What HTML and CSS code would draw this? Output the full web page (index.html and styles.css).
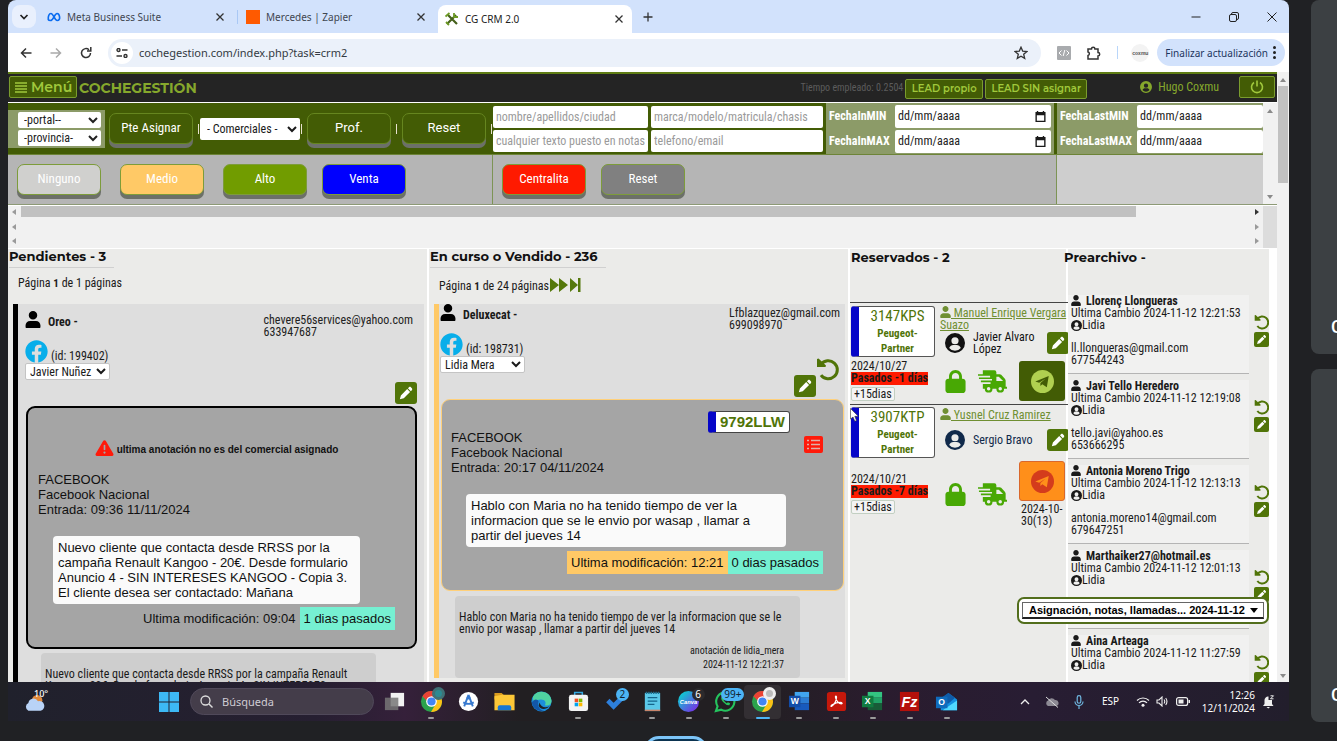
FILE: index.html
```
<!DOCTYPE html>
<html lang="es">
<head>
<meta charset="utf-8">
<title>CG CRM 2.0</title>
<link rel="stylesheet" href="styles.css">
</head>
<body>
<svg class="sprite" aria-hidden="true">
  <symbol id="user" viewBox="0 0 448 512"><path d="M224 256c70.700 0 128-57.300 128-128S294.700 0 224 0 96 57.300 96 128s57.300 128 128 128zm89.600 48H134.400C60.200 304 0 364 0 432v50c0 18 12 30 30 30h388c18 0 30-12 30-30v-50c0-68-60.200-128-134.400-128z"/></symbol>
  <symbol id="circle-user" viewBox="0 0 24 24"><path fill-rule="evenodd" d="M12 0a12 12 0 1 0 0 24 12 12 0 0 0 0-24zm0 5a4.300 4.300 0 1 1 0 8.600A4.300 4.300 0 0 1 12 5zm-7 13c1-2.500 2.800-3.700 5-3.700h4c2.200 0 4 1.200 5 3.700a9 9 0 0 1-14 0z"/></symbol>
  <symbol id="facebook" viewBox="0 0 512 512"><path d="M504 256C504 119 393 8 256 8S8 119 8 256c0 123.780 90.690 226.380 209.250 245V327.690h-63V256h63v-54.640c0-62.150 37-96.480 93.670-96.480 27.140 0 55.520 4.840 55.520 4.840v61h-31.280c-30.800 0-40.410 19.120-40.410 38.730V256h68.780l-11 71.690h-57.780V501C413.310 482.380 504 379.780 504 256z"/></symbol>
  <symbol id="pencil" viewBox="0 0 24 24"><path d="M5.200 15.200 13.600 6.800l3.800 3.800L9 19l-5.200 1.400zM14.600 5.800l1.400-1.400c.8-.8 1.800-.8 2.500 0l1.300 1.300c.7.700.7 1.700 0 2.500l-1.400 1.400z"/></symbol>
  <symbol id="undo" viewBox="0 0 24 24"><path d="M5 7.500A9 9 0 1 1 5 18" fill="none" stroke="currentColor" stroke-width="3"/><path d="M1 2l1.500-.5L10 8.500 9.500 10H1z"/></symbol>
  <symbol id="lock" viewBox="0 0 448 512"><path d="M144 144v48H304V144c0-44.200-35.800-80-80-80s-80 35.800-80 80zM80 192V144C80 64.500 144.500 0 224 0s144 64.500 144 144v48h16c35.300 0 64 28.700 64 64V448c0 35.300-28.700 64-64 64H64c-35.300 0-64-28.700-64-64V256c0-35.300 28.700-64 64-64H80z"/></symbol>
  <symbol id="truck" viewBox="0 0 30 24"><path fill-rule="evenodd" d="M5 1h12q2 0 2 2v2h3.500l1.500.6L28 10l.6 1.400V18H30v2h-3a4 4 0 0 1-8 0h-4a4 4 0 0 1-8 0H5v-5h8v-1.800H3v-1.600h11.500V10H1V8.400h11.500V6.600H0V5h5zm14 6.500V12h7l-4.500-4.500z"/><circle cx="11" cy="20" r="1.800" fill="#ebebe9"/><circle cx="23" cy="20" r="1.800" fill="#ebebe9"/></symbol>
  <symbol id="plane" viewBox="0 0 24 24"><circle cx="12" cy="12" r="12"/><path class="cut" d="M4.500 12 18.500 6.200 16.500 18l-4.700-3.200-2 2v-3.300L15 9l-6.500 4.300z"/></symbol>
  <symbol id="cross" viewBox="0 0 10 10"><path d="M1.500 1.500l7 7m0-7l-7 7" fill="none" stroke="currentColor" stroke-width="1.300"/></symbol>
  <symbol id="calendar" viewBox="0 0 12 12"><path fill-rule="evenodd" d="M2 0h1.500v1h5V0H10v1h1.500v11H.5V1H2zM2 4.500v6h8v-6z"/></symbol>
  <symbol id="chrome" viewBox="0 0 24 24"><circle cx="12" cy="12" r="11" fill="#2ba24c"/><path d="M2.500 6.500a11 11 0 0 1 19.500 1H12v9z" fill="#ea4335"/><path d="M22 7.500A11 11 0 0 1 11.500 23L17 13.500 15.500 7.500z" fill="#fbc116"/><circle cx="12" cy="12" r="5.600" fill="#fff"/><circle cx="12" cy="12" r="4.300" fill="#4285f4"/></symbol>
</svg>

<div class="shell">
  <div class="screen">
    <header class="tabs">
      <button class="tab-search" aria-label="Buscar pestañas"><svg viewBox="0 0 10 10"><path d="M1.500 3l3.500 3.500L8.500 3" fill="none" stroke="#222" stroke-width="1.700"/></svg></button>
      <div class="tab tab-meta">
        <svg class="fav" viewBox="0 0 16 12"><path d="M1.500 9C1 5 2.500 2 4.500 2c3 0 4 8 7.200 8 2 0 3-1.500 2.700-4C14 3 12.800 2 11.500 2 8.500 2 7.500 10 4 10 2.500 10 1.700 9.500 1.500 9z" fill="none" stroke="#0a6cf0" stroke-width="1.900"/></svg>
        <span>Meta Business Suite</span><svg class="x"><use href="#cross"/></svg>
      </div>
      <div class="tab tab-zapier"><i class="fav orange"></i><span>Mercedes | Zapier</span><svg class="x"><use href="#cross"/></svg></div>
      <div class="tab active">
        <svg class="fav" viewBox="0 0 14 14"><path d="M2 12l9-9M3 3l9 9" stroke="#46611c" stroke-width="2.200"/><path d="M.5 4.500l4-3.500M9 1v4h4M1 10l3 3" fill="none" stroke="#6c9a24" stroke-width="1.800"/></svg>
        <span>CG CRM 2.0</span><svg class="x"><use href="#cross"/></svg>
      </div>
      <button class="newtab" aria-label="Nueva pestaña"><svg viewBox="0 0 10 10"><path d="M5 .5v9M.5 5h9" stroke="#333" stroke-width="1.300"/></svg></button>
      <div class="winctl">
        <svg viewBox="0 0 10 10"><path d="M.5 5h9" stroke="#222"/></svg>
        <svg viewBox="0 0 10 10"><rect x=".5" y="2.500" width="7" height="7" rx="1.500" fill="none" stroke="#222"/><path d="M2.500 2.500V2A1.500 1.500 0 0 1 4 .5h4A1.500 1.500 0 0 1 9.500 2v4A1.500 1.500 0 0 1 8 7.500" fill="none" stroke="#222"/></svg>
        <svg viewBox="0 0 10 10"><path d="M.5.5l9 9m0-9l-9 9" stroke="#222"/></svg>
      </div>
    </header>
    <div class="toolbar">
      <svg class="nav" viewBox="0 0 12 12"><path d="M11.500 6H1.500M6 1.500L1.500 6 6 10.500" fill="none" stroke="#333" stroke-width="1.500"/></svg>
      <svg class="nav" viewBox="0 0 12 12"><path d="M.5 6h10M6 1.500L10.500 6 6 10.500" fill="none" stroke="#aaa" stroke-width="1.500"/></svg>
      <svg class="nav" viewBox="0 0 12 12"><path d="M10.500 6A4.500 4.500 0 1 1 9 2.700M10.800 0v4H7" fill="none" stroke="#333" stroke-width="1.500"/></svg>
      <div class="omnibox">
        <span class="site"><svg viewBox="0 0 12 10"><path d="M6 2h5.500M.5 8H6" stroke="#333" stroke-width="1.500"/><circle cx="2.500" cy="2" r="1.500" fill="none" stroke="#333" stroke-width="1.400"/><circle cx="9.500" cy="8" r="1.500" fill="none" stroke="#333" stroke-width="1.400"/></svg></span>
        <input class="url" aria-label="Dirección" value="cochegestion.com/index.php?task=crm2">
        <svg class="star" viewBox="0 0 14 14"><path d="M7 1.200l1.700 3.900 4.200.4-3.200 2.800 1 4.100L7 10.200l-3.700 2.200 1-4.100L1.100 5.500l4.200-.4z" fill="none" stroke="#333" stroke-width="1.300"/></svg>
      </div>
      <svg class="ext" viewBox="0 0 14 14"><rect width="14" height="14" rx="1" fill="#a9abae"/><path d="M4.500 4.500L2 7l2.500 2.500M9.500 4.500L12 7 9.500 9.500M7.800 4L6.200 10" fill="none" stroke="#fff"/></svg>
      <svg class="ext" viewBox="0 0 14 14"><path d="M1 3h3.500a1.700 1.700 0 0 1 3.400 0H11v3.500a1.700 1.700 0 0 1 0 3.400V13H1V9.500a1.800 1.800 0 0 0 0-3.500z" fill="none" stroke="#333" stroke-width="1.500"/></svg>
      <i class="split"></i>
      <span class="avatar">coxmu</span>
      <button class="update">Finalizar actualización <b class="dots"><i></i><i></i><i></i></b></button>
    </div>

    <div class="viewport">
      <main class="crm">
        <div class="topbar">
          <button class="gbtn menu"><svg viewBox="0 0 12 11"><path d="M0 1h12M0 4h12M0 7h12M0 10h12" stroke="currentColor" stroke-width="1.300"/></svg>Menú</button>
          <span class="brand">COCHEGESTIÓN</span>
          <span class="elapsed">Tiempo empleado: 0.2504</span>
          <button class="gbtn lead">LEAD propio</button>
          <button class="gbtn lead sin">LEAD SIN asignar</button>
          <span class="who"><svg><use href="#circle-user"/></svg>Hugo Coxmu</span>
          <button class="gbtn power" aria-label="Salir"><svg viewBox="0 0 14 14"><path d="M7 .5v6M4 2.500a5.500 5.500 0 1 0 6 0" fill="none" stroke="currentColor" stroke-width="1.600"/></svg></button>
        </div>

        <div class="panel">
          <div class="filters">
            <div class="filter-row">
              <div class="pair geo">
                <select aria-label="Portal"><option>-portal--</option></select>
                <select aria-label="Provincia"><option>-provincia-</option></select>
              </div>
              <button class="push dark cond">Pte Asignar</button>
              <i class="bar"></i>
              <select class="comm" aria-label="Comerciales"><option>- Comerciales -</option></select>
              <i class="bar"></i>
              <button class="push dark prof">Prof.</button>
              <i class="bar mid"></i>
              <button class="push dark">Reset</button>
              <i class="bar last"></i>
              <div class="pair w1">
                <input aria-label="Nombre" placeholder="nombre/apellidos/ciudad">
                <input aria-label="Notas" placeholder="cualquier texto puesto en notas">
              </div>
              <div class="pair w2">
                <input aria-label="Vehículo" placeholder="marca/modelo/matricula/chasis">
                <input aria-label="Contacto" placeholder="telefono/email">
              </div>
              <div class="dates">
                <label for="imin">FechaInMIN</label><span class="date"><input id="imin" value="dd/mm/aaaa"><svg><use href="#calendar"/></svg></span>
                <label for="imax">FechaInMAX</label><span class="date"><input id="imax" value="dd/mm/aaaa"><svg><use href="#calendar"/></svg></span>
              </div>
              <div class="dates more">
                <label for="lmin">FechaLastMIN</label><span class="date"><input id="lmin" value="dd/mm/aaaa"></span>
                <label for="lmax">FechaLastMAX</label><span class="date"><input id="lmax" value="dd/mm/aaaa"></span>
              </div>
            </div>
            <div class="level-row">
              <div class="cell levels"><button class="push none">Ninguno</button><button class="push mid-l">Medio</button><button class="push high">Alto</button><button class="push sale">Venta</button></div>
              <div class="cell central"><button class="push red">Centralita</button><button class="push grey">Reset</button></div>
              <div class="cell rest"></div>
            </div>
          </div>
          <div class="vbar"><i class="up"></i><i class="down"></i></div>
        </div>

        <div class="hbars">
          <div class="hbar first"><i class="l"></i><b></b><i class="r"></i></div>
          <div class="hbar"><i class="l"></i><i class="r"></i></div>
          <div class="hbar"><i class="l"></i><i class="r"></i></div>
        </div>

        <div class="board">
          <section class="col">
            <h2><span>Pendientes - 3</span></h2>
            <p class="pages">Página <b>1</b> de 1 páginas</p>
            <article class="lead-card pend">
              <div class="person"><svg class="pic"><use href="#user"/></svg><b>Oreo -</b><div class="contact">chevere56services@yahoo.com<br>633947687</div></div>
              <div class="ident"><svg><use href="#facebook"/></svg>(id: 199402)</div>
              <div class="assign"><select aria-label="Comercial"><option>Javier Nuñez</option></select></div>
              <div class="tools"><button class="edit" aria-label="Editar"><svg><use href="#pencil"/></svg></button></div>
              <div class="detail">
                <p class="warn"><svg viewBox="0 0 512 512"><path fill-rule="evenodd" d="M256 32c14.200 0 27.300 7.500 34.500 19.800l216 368c7.300 12.400 7.300 27.700.2 40.100S486.300 480 472 480H40c-14.300 0-27.600-7.700-34.700-20.100s-7-27.800.2-40.100l216-368C228.700 39.500 241.800 32 256 32zm0 128c-13.300 0-24 10.700-24 24V296c0 13.300 10.700 24 24 24s24-10.700 24-24V184c0-13.300-10.700-24-24-24zm32 224a32 32 0 1 0-64 0 32 32 0 1 0 64 0z"/></svg>ultima anotación no es del comercial asignado</p>
                <p class="origin">FACEBOOK<br>Facebook Nacional<br>Entrada: 09:36 11/11/2024</p>
                <p class="note">Nuevo cliente que contacta desde RRSS por la campaña Renault Kangoo - 20€. Desde formulario Anuncio 4 - SIN INTERESES KANGOO - Copia 3. El cliente desea ser contactado: Mañana</p>
                <p class="mod"><span>Ultima modificación: 09:04</span><span class="ago">1 dias pasados</span></p>
              </div>
              <div class="history">Nuevo cliente que contacta desde RRSS por la campaña Renault Kangoo - 20€. Desde formulario Anuncio 4 - SIN INTERESES KANGOO</div>
            </article>
          </section>

          <section class="col">
            <h2><span>En curso o Vendido - 236</span></h2>
            <p class="pages more-pages">Página <b>1</b> de 24 páginas <svg viewBox="0 0 31 14"><path d="M0 0l9 7-9 7zM9 0l9 7-9 7zM20 0l8 7-8 7zM28 0h2.500v14H28z"/></svg></p>
            <article class="lead-card curso">
              <div class="person"><svg class="pic"><use href="#user"/></svg><b>Deluxecat -</b><div class="contact">Lfblazquez@gmail.com<br>699098970</div></div>
              <div class="ident"><svg><use href="#facebook"/></svg>(id: 198731)</div>
              <div class="assign"><select aria-label="Comercial"><option>Lidia Mera</option></select></div>
              <div class="tools"><button class="edit" aria-label="Editar"><svg><use href="#pencil"/></svg></button><button class="undo" aria-label="Deshacer"><svg><use href="#undo"/></svg></button></div>
              <div class="detail">
                <div class="plate-row"><span class="plate">9792LLW</span></div>
                <svg class="list" viewBox="0 0 19 17"><rect width="19" height="17" rx="2"/><path d="M3 4.500h2M3 8.500h2M3 12.500h2M7 4.500h9M7 8.500h9M7 12.500h9" stroke="#e0b0a8" stroke-width="1.500"/></svg>
                <p class="origin">FACEBOOK<br>Facebook Nacional<br>Entrada: 20:17 04/11/2024</p>
                <p class="note">Hablo con Maria no ha tenido tiempo de ver la informacion que se le envio por wasap , llamar a partir del jueves 14</p>
                <p class="mod"><span class="amber">Ultima modificación: 12:21</span><span class="ago">0 dias pasados</span></p>
              </div>
              <div class="history">Hablo con Maria no ha tenido tiempo de ver la informacion que se le envio por wasap , llamar a partir del jueves 14
                <p class="sign">anotación de lidia_mera<br>2024-11-12 12:21:37</p></div>
            </article>
          </section>

          <section class="col reserved">
            <h2><span>Reservados - 2</span></h2>
            <article class="booking">
              <div class="bigplate"><span>3147KPS</span><b>Peugeot-<br>Partner</b></div>
              <div class="owner">
                <a href="#"><svg><use href="#user"/></svg> Manuel Enrique Vergara Suazo</a>
                <div class="agent"><svg><use href="#circle-user"/></svg><span>Javier Alvaro López</span><button class="edit" aria-label="Editar"><svg><use href="#pencil"/></svg></button></div>
              </div>
              <div class="due">2024/10/27<b>Pasados -1 días</b><button>+15dias</button></div>
              <div class="acts"><svg class="lock"><use href="#lock"/></svg><svg class="truck"><use href="#truck"/></svg><div class="tg"><button aria-label="Telegram"><svg><use href="#plane"/></svg></button></div></div>
            </article>
            <article class="booking second">
              <div class="bigplate"><span>3907KTP</span><b>Peugeot-<br>Partner</b></div>
              <div class="owner">
                <a href="#"><svg><use href="#user"/></svg> Yusnel Cruz Ramirez</a>
                <div class="agent navy"><svg><use href="#circle-user"/></svg><span>Sergio Bravo</span><button class="edit" aria-label="Editar"><svg><use href="#pencil"/></svg></button></div>
              </div>
              <div class="due">2024/10/21<b>Pasados -7 días</b><button>+15dias</button></div>
              <div class="acts"><svg class="lock"><use href="#lock"/></svg><svg class="truck"><use href="#truck"/></svg><div class="tg hot"><button aria-label="Telegram"><svg><use href="#plane"/></svg></button><span>2024-10-30(13)</span></div></div>
            </article>
            <svg class="pointer" viewBox="0 0 9 14"><path d="M.5.5v10.500l2.500-2 1.800 4.300 1.700-.8L4.800 8.300H8.300z" fill="#fff" stroke="#333" stroke-width=".6"/></svg>
          </section>

          <section class="col archive">
            <h2><span>Prearchivo -</span></h2>
            <article class="arch"><div class="info"><b><svg><use href="#user"/></svg>Llorenç Llongueras</b><span>Ultima Cambio 2024-11-12 12:21:53</span><span class="by"><svg><use href="#circle-user"/></svg>Lidia</span><span class="mail">ll.llongueras@gmail.com</span><span>677544243</span></div><div class="side"><svg><use href="#undo"/></svg><button class="edit" aria-label="Editar"><svg><use href="#pencil"/></svg></button></div></article>
            <article class="arch"><div class="info"><b><svg><use href="#user"/></svg>Javi Tello Heredero</b><span>Ultima Cambio 2024-11-12 12:19:08</span><span class="by"><svg><use href="#circle-user"/></svg>Lidia</span><span class="mail">tello.javi@yahoo.es</span><span>653666295</span></div><div class="side"><svg><use href="#undo"/></svg><button class="edit" aria-label="Editar"><svg><use href="#pencil"/></svg></button></div></article>
            <article class="arch"><div class="info"><b><svg><use href="#user"/></svg>Antonia Moreno Trigo</b><span>Ultima Cambio 2024-11-12 12:13:13</span><span class="by"><svg><use href="#circle-user"/></svg>Lidia</span><span class="mail">antonia.moreno14@gmail.com</span><span>679647251</span></div><div class="side"><svg><use href="#undo"/></svg><button class="edit" aria-label="Editar"><svg><use href="#pencil"/></svg></button></div></article>
            <article class="arch"><div class="info"><b><svg><use href="#user"/></svg>Marthaiker27@hotmail.es</b><span>Ultima Cambio 2024-11-12 12:01:13</span><span class="by"><svg><use href="#circle-user"/></svg>Lidia</span></div><div class="side"><svg><use href="#undo"/></svg><button class="edit" aria-label="Editar"><svg><use href="#pencil"/></svg></button></div></article>
            <article class="arch"><div class="info"><b><svg><use href="#user"/></svg>Aina Arteaga</b><span>Ultima Cambio 2024-11-12 11:27:59</span><span class="by"><svg><use href="#circle-user"/></svg>Lidia</span></div><div class="side"><svg><use href="#undo"/></svg><button class="edit" aria-label="Editar"><svg><use href="#pencil"/></svg></button></div></article>
          </section>
        </div>
      </main>
      <div class="pagebar"><i class="up"></i><b></b><i class="down"></i></div>
      <div class="floating"><select aria-label="Asignación"><option>Asignación, notas, llamadas... 2024-11-12</option></select></div>
    </div>

    <footer class="taskbar">
      <div class="weather"><svg viewBox="0 0 24 22"><circle cx="15" cy="9" r="6" fill="#e08a3c"/><path d="M5 21a5 5 0 0 1 0-9 6 6 0 0 1 11-2 5.500 5.500 0 0 1 3 11z" fill="#b9d3f7"/></svg><span>10°</span></div>
      <svg class="start" viewBox="0 0 20 20"><path fill="#3db9f5" d="M0 0h9.500v9.500H0zM10.500 0H20v9.500h-9.500zM0 10.500h9.500V20H0zM10.500 10.500H20V20h-9.500z"/></svg>
      <label class="search"><svg viewBox="0 0 13 13"><circle cx="5.500" cy="5.500" r="4.500" fill="none" stroke="#ddd" stroke-width="1.300"/><path d="M9 9l3.500 3.500" stroke="#ddd" stroke-width="1.400"/></svg><input placeholder="Búsqueda" aria-label="Búsqueda"></label>
      <div class="apps">
        <span><svg viewBox="0 0 24 24"><path fill="#f2f2f2" d="M8 3h14v14H8z"/><path fill="#777" fill-opacity=".85" d="M2 8h14v13H2z"/></svg></span>
        <span class="run"><svg><use href="#chrome"/></svg><i class="face"></i></span>
        <span><svg viewBox="0 0 24 24"><circle cx="12" cy="12" r="10" fill="#fff"/><path d="M12 5L7.500 17M12 5l4.500 12M6.500 13q5.500 3 11 0" fill="none" stroke="#3779cf" stroke-width="2"/><circle cx="12" cy="8" r="2" fill="#3779cf"/></svg></span>
        <span><svg viewBox="0 0 24 24"><path fill="#d99b1f" d="M1.500 3H9l2 2v5H1.500z"/><path fill="#fcc737" d="M1.500 6.500l8-1.500h13v16h-21z"/><path fill="#1677d2" d="M5 21v-3q0-2 2-2h10q2 0 2 2v3z"/></svg></span>
        <span><svg viewBox="0 0 24 24"><circle cx="12" cy="12" r="10.500" fill="#1c8fdb"/><path d="M3 7a10.500 10.500 0 0 1 19.500 4c0 4-3 6-7 5 2-3 0-6-4-6-3 0-6 1-8 3z" fill="#4fd2a0"/><path d="M9 12c-2 4 1 9 6 10-7 1-13-4-13-9 2-4 6-4 7-1z" fill="#1357a8"/><path d="M10 13c1 5 6 6 10 4-3 4-10 4-11-1z" fill="#202124"/></svg></span>
        <span class="run"><svg viewBox="0 0 24 24"><path d="M8 6V2.500h8V6" fill="none" stroke="#35a8e0" stroke-width="1.600"/><rect x="2" y="5" width="20" height="17" rx="2.500" fill="#f4f4f4"/><path fill="#f25022" d="M8 9h3.700v3.700H8z"/><path fill="#7fba00" d="M12.300 9H16v3.700h-3.700z"/><path fill="#00a4ef" d="M8 13.300h3.700V17H8z"/><path fill="#ffb900" d="M12.300 13.300H16V17h-3.700z"/></svg></span>
        <span><svg viewBox="0 0 24 24"><path d="M4 11l6 6L21 6" fill="none" stroke="#2d7fdc" stroke-width="5"/></svg><em class="badge">2</em></span>
        <span class="run"><svg viewBox="0 0 24 24"><path fill="#5bc8e8" d="M4 3h16v19H4z"/><path fill="#c9846a" d="M4 20.500h16V22H4z"/><path d="M5 3h14" stroke="#1e6f8f" stroke-width="2.500" stroke-dasharray="1.500 1"/><path d="M7 8h10M7 11.500h10M7 15h7" stroke="#15648a" stroke-width="1.300"/></svg></span>
        <span class="run"><svg viewBox="0 0 24 24"><defs><linearGradient id="cv" x2="1" y2="1"><stop offset=".2" stop-color="#15bfd3"/><stop offset=".9" stop-color="#7a2be8"/></linearGradient></defs><circle cx="12" cy="12" r="11" fill="url(#cv)"/><text x="12" y="15" text-anchor="middle" class="canva">Canva</text></svg><em class="badge plain">6</em></span>
        <span class="run"><svg viewBox="0 0 24 24"><path d="M2 22l1.700-5A9.500 9.500 0 1 1 7.500 20.500z" fill="none" stroke="#25c35e" stroke-width="2.200"/><path d="M8 7q-1.500 2 1.500 5.500T16 16l.8-2.300-2.300-1-1.200 1.100Q11 12.500 10 10.500l1-1L10 7z" fill="#25c35e"/></svg><em class="badge wide">99+</em></span>
        <span class="run focus"><svg><use href="#chrome"/></svg><i class="face white"></i></span>
        <span class="run"><svg viewBox="0 0 24 24"><path fill="#41a5ee" d="M7 2h15v6H7z"/><path fill="#2b7cd3" d="M7 8h15v6H7z"/><path fill="#185abd" d="M7 14h15v7H7z"/><path fill="#134da8" d="M1 6h12v12H1z"/><text x="7" y="15" text-anchor="middle" class="office">W</text></svg></span>
        <span class="run"><svg viewBox="0 0 24 24"><rect x="2" y="2" width="20" height="20" rx="3" fill="#c5180b"/><path d="M7 17c2.500-1.500 5-6 5-9.500 0-1.800-1.500-1.300-1 .5.700 3 3.500 6.500 6 6.500 1.500 0 1-1.500-1-1.500-3 0-6 1-8.500 2.500-1.500 1-1.500 2-.5 1.500z" fill="none" stroke="#fff" stroke-width="1.300"/></svg></span>
        <span class="run"><svg viewBox="0 0 24 24"><path fill="#33c481" d="M7 2h15v6H7z"/><path fill="#21a366" d="M7 8h15v6H7z"/><path fill="#185c37" d="M7 14h15v7H7z"/><path fill="#107c41" d="M1 6h12v12H1z"/><text x="7" y="15" text-anchor="middle" class="office">X</text></svg></span>
        <span class="run"><svg viewBox="0 0 24 24"><path fill="#b5100b" d="M2 2h20v20H2z"/><text x="12" y="18" text-anchor="middle" class="fz">Fz</text></svg></span>
        <span class="run"><svg viewBox="0 0 24 24"><path fill="#1490df" d="M6 10l8-7 9 7v11H6z"/><path fill="#0f5ba8" d="M8 7l6-4 7 5-7 6H8z"/><path fill="#50d9ff" d="M8 21l15-10v10z"/><path fill="#0f6cbd" d="M1 7h12v12H1z"/><text x="7" y="16" text-anchor="middle" class="office">O</text></svg></span>
      </div>
      <div class="tray">
        <svg class="t-up" viewBox="0 0 10 10"><path d="M1 7l4-4 4 4" fill="none" stroke="#eee" stroke-width="1.300"/></svg>
        <svg class="t-cloud" viewBox="0 0 14 12"><path d="M3 10a3 3 0 0 1 0-5.500 4 4 0 0 1 7-.5 3 3 0 0 1 1 6z" fill="#8d8a94"/><path d="M1 1l12 10.500" stroke="#ddd"/></svg>
        <svg class="t-mic" viewBox="0 0 10 14"><rect x="3.200" y=".7" width="3.600" height="7.500" rx="1.800" fill="none" stroke="#6fb7e0" stroke-width="1.200"/><path d="M1 6.500a4 4 0 0 0 8 0M5 10.500V14" fill="none" stroke="#6fb7e0" stroke-width="1.200"/></svg>
        <span class="lang">ESP</span>
        <svg class="t-wifi" viewBox="0 0 14 11"><path d="M1 4.500a8.500 8.500 0 0 1 12 0M3 6.800a5.600 5.600 0 0 1 8 0" fill="none" stroke="#eee" stroke-width="1.200"/><circle cx="7" cy="9.200" r="1.500" fill="#eee"/></svg>
        <svg class="t-vol" viewBox="0 0 13 11"><path d="M1 4h2l3-3v9L3 7H1zM8 3.500q1.500 2 0 4M9.700 2q2.500 3.500 0 7" fill="none" stroke="#eee" stroke-width="1.100"/></svg>
        <svg class="t-bat" viewBox="0 0 14 9"><rect x=".6" y=".6" width="11" height="7.800" rx="2" fill="none" stroke="#eee" stroke-width="1.200"/><path d="M2.500 2.500h5v4h-5zM12.500 3v3h1.500V3z" fill="#eee"/></svg>
        <span class="clock">12:26<br>12/11/2024</span>
        <svg class="t-bell" viewBox="0 0 13 14"><path d="M1 11l1.500-2V5a3.500 3.500 0 0 1 4-3.400V5H10v4l1.500 2zM4.500 12h3.500l-1.700 1.500z" fill="#eee"/><path d="M8.500.8h3l-3 3h3" fill="none" stroke="#eee"/></svg>
      </div>
    </footer>
    <div class="below"><i class="pill"></i></div>
  </div>
  <aside class="tiles">
    <div class="tile"><span>C</span></div>
    <div class="tile"><span>C</span></div>
  </aside>
</div>
</body>
</html>
```
FILE: styles.css
```
:root {
  --cond: "Roboto Condensed", "Liberation Sans Narrow", "DejaVu Sans Condensed", sans-serif;
  --round: "Montserrat", "Inter", sans-serif;
  --arial: "Liberation Sans", Arial, sans-serif;
  --ui: "Noto Sans", "Open Sans", sans-serif;
  --green: #435c05;
  --olive: #8c9b68;
  --lime: #a0c83c;
  --ink: #1a1a1a;
  --cut: #425c05;
}
* { box-sizing: border-box; }
body { margin: 0; background: #202124; font-family: var(--cond); font-size: 12px; line-height: 12px; color: var(--ink); }
h2, p { margin: 0; }
button, select, input { font: inherit; color: inherit; margin: 0; padding: 0; border: 0; background: none; min-width: 0; }
svg { fill: currentColor; flex: none; }
.sprite { position: absolute; width: 0; height: 0; }

.shell { display: grid; grid-template-columns: minmax(0, 1fr) 26px; column-gap: 22px; padding-left: 8px; height: 100vh; overflow: hidden; }
.screen { display: flex; flex-direction: column; min-height: 0; }
.tiles { display: grid; grid-template-rows: 354fr 353fr; gap: 15px; padding-bottom: 19px; }
.tile { background: #3c4043; border-radius: 8px 0 0 8px; overflow: hidden; display: flex; align-items: flex-end; padding: 0 0 17px 20px; color: #fff; font: 500 18px/20px Roboto, sans-serif; }

/* browser chrome */
.tabs { height: 33px; background: #d2e2fc; border-radius: 8px 8px 0 0; display: flex; align-items: center; font: 10px/16px var(--ui); color: #3f4650; flex: none; }
.tab-search { width: 24px; height: 23px; border-radius: 8px; background: #e9f0fd; margin-left: 4px; display: grid; place-items: center; }
.tab-search svg, .newtab svg { width: 10px; height: 10px; }
.tab { display: flex; align-items: center; height: 28px; padding-right: 12px; }
.fav { width: 14px; height: 14px; margin-right: 6px; }
.tab .x { width: 10px; height: 10px; margin-left: auto; color: #333; }
.tab-meta { width: 202px; padding-left: 11px; border-right: 1px solid #a9c8f5; height: 14px; }
.tab-zapier { width: 200px; padding-left: 8px; }
.orange { background: #ff5a00; }
.active { width: 194px; background: #fff; align-self: flex-end; border-radius: 8px 8px 0 0; padding-left: 7px; padding-right: 8px; color: #222; }
.newtab { width: 32px; height: 24px; display: grid; place-items: center; }
.winctl { margin-left: auto; display: flex; gap: 28px; padding-right: 12px; }
.winctl svg { width: 10px; height: 10px; }
.toolbar { height: 39px; flex: none; background: #fff; display: flex; align-items: center; gap: 16px; padding: 0 4px 0 12px; }
.nav { width: 12px; height: 12px; }
.nav + .nav { margin-left: 2px; }
.omnibox { flex: 1; height: 28px; border-radius: 14px; background: #ebf1fa; display: flex; align-items: center; padding: 0 13px 0 3px; }
.site { width: 22px; height: 22px; border-radius: 50%; background: #fff; display: grid; place-items: center; margin-right: 6px; }
.site svg { width: 12px; height: 10px; }
.url { flex: 1; font: 11px/18px var(--ui); color: #333a42; }
.star { width: 14px; height: 14px; }
.ext { width: 14px; height: 14px; }
.split { width: 1px; height: 13px; background: #b9d6fa; }
.avatar { width: 18px; height: 18px; border-radius: 50%; background: #f3f3f3; font: bold 5px/18px var(--arial); text-align: center; color: #555; margin: 0 -8px 0 -3px; }
.update { height: 27px; border-radius: 14px; background: #d2e2fc; font: 10px/16px var(--ui); color: #1c355e; padding: 0 9px 0 8px; display: flex; align-items: center; gap: 5px; white-space: nowrap; }
.dots { display: grid; gap: 2px; }
.dots i { width: 3px; height: 3px; border-radius: 50%; background: #222; }

/* page frame */
.viewport { flex: 1; min-height: 0; display: flex; position: relative; background: #fff; overflow: hidden; }
.crm { flex: 1; min-width: 0; display: flex; flex-direction: column; }
.pagebar, .vbar { display: flex; flex-direction: column; align-items: center; background: #f1f1f1; color: #8a8a8a; }
.pagebar { width: 12px; padding: 6px 0 4px; }
.pagebar b { width: 10px; height: 97px; background: #c1c1c1; margin-top: 4px; }
.up, .down { border: 3px solid transparent; }
.up { border-top: 0; border-bottom: 4px solid #8a8a8a; }
.down { border-bottom: 0; border-top: 4px solid #8a8a8a; margin-top: auto; }

.topbar { height: 30px; background: #242424; border-top: 2px solid #5f7d14; display: flex; align-items: flex-start; padding: 2px 2px 0 1px; flex: none; }
.gbtn { background: var(--green); color: var(--lime); border: 1px solid #7a9c2e; border-radius: 2px; height: 22px; font-family: var(--round); font-weight: 600; }
.menu { width: 68px; font-size: 14px; display: flex; align-items: center; gap: 4px; padding-left: 5px; }
.menu svg { width: 12px; height: 11px; }
.brand { font: 700 14px/24px var(--round); color: #86a82c; margin-left: 2px; }
.elapsed { margin-left: auto; font-size: 10px; line-height: 24px; color: #5c5c5c; margin-right: 2px; }
.lead { height: 20px; margin-top: 3px; font-size: 10px; width: 78px; }
.sin { width: 102px; margin-left: 2px; }
.who { display: flex; align-items: center; height: 22px; gap: 6px; color: #86a82c; margin: 0 20px 0 53px; }
.who svg { width: 12px; height: 12px; }
.power { width: 36px; display: grid; place-items: center; }
.power svg { width: 14px; height: 14px; }

/* filters */
.panel { display: flex; margin-top: 1px; height: 102px; border-bottom: 1px solid #8d9a76; flex: none; }
.filters { flex: 1; min-width: 0; overflow: hidden; }
.vbar { width: 14px; padding: 6px 0 5px; }
.filter-row { height: 51px; background: var(--green); display: flex; align-items: center; }
.pair { display: flex; flex-direction: column; gap: 2px; flex: none; }
.pair input { background: #fff; border-radius: 2px; height: 22px; padding: 0 3px; }
.pair input::placeholder { color: #9a9a9a; opacity: 1; }
.geo { background: var(--olive); width: 97px; padding: 2px 4px 2px 10px; }
select { background: #fff; border-radius: 2px; }
.geo select { height: 16px; padding-left: 2px; color: #222; }
.push { flex: none; width: 84px; height: 31px; border: 1px solid #7d9c3a; border-radius: 7px; color: #fff; box-shadow: 0 4px 0 #6c7068; font-weight: 400; font-size: 13px; }
.dark { background: var(--green); border-color: #66861f; font-family: Roboto, sans-serif; }
.filter-row .push { margin-bottom: 1px; }
.cond { font-family: var(--cond); margin-left: 4px; }
.bar { width: 1px; height: 10px; background: #e8e2cf; flex: none; margin-left: 5px; }
.bar + select { margin-left: 1px; }
.comm { width: 100px; height: 22px; padding-left: 3px; flex: none; }
.comm + .bar { margin-left: 1px; }
.prof { margin-left: 5px; }
.mid { margin-right: 5px; }
.last { margin-right: 1px; }
.w1 { width: 155px; }
.w2 { width: 172px; margin-left: 3px; }
.dates { align-self: stretch; flex: none; width: 228px; margin-left: 3px; background: var(--olive); display: grid; grid-template-columns: 66px minmax(0, 1fr); gap: 2px 0; padding: 2px 3px; align-content: center; align-items: center; }
.dates label { color: #fff; font-weight: 700; line-height: 23px; white-space: nowrap; }
.date { background: #fff; border-radius: 2px; height: 23px; display: flex; align-items: center; padding: 0 5px 0 3px; }
.date input { flex: 1; width: 0; color: #222; }
.date svg { width: 11px; height: 11px; }
.more { flex: 1; grid-template-columns: 77px minmax(0, 1fr); padding-right: 0; }
.level-row { display: grid; grid-template-columns: 485px 564px 1fr; height: 50px; border-top: 1px solid #6d8437; background: #b5b5b5; }
.cell { display: flex; align-items: center; padding: 1px 0 2px 9px; border-right: 1px solid #7d9455; }
.levels { gap: 19px; }
.levels .push + .push + .push + .push { margin-left: -4px; }
.central { gap: 15px; }
.rest { background: #cecece; border: 0; }
.none { background: #d0d0ce; }
.mid-l { background: #ffc966; }
.high { background: #719c00; }
.sale { background: #0000fe; }
.red { background: #ff1a00; }
.grey { background: #808080; }

.hbars { margin-top: 1px; background: #f1f1f1; border-right: 14px solid #dcdcdc; flex: none; }
.hbar { height: 14px; display: flex; align-items: center; justify-content: space-between; padding: 0 4px; }
.hbar.first { align-items: flex-start; }
.hbar b { flex: 1; height: 11px; background: #c1c1c1; margin-right: 119px; margin-left: 5px; }
.hbar .l, .hbar .r { border: 3px solid transparent; }
.hbar.first .l, .hbar.first .r { margin-top: 3px; }
.hbar .l { border-left: 0; border-right: 4px solid #9a9a9a; }
.hbar .r { border-right: 0; border-left: 4px solid #9a9a9a; }
.hbar.first .r { border-left-color: #333; }

/* board */
.board { flex: 1; min-height: 0; display: grid; grid-template-columns: 419fr 419fr 216fr 201fr; gap: 2px; margin: 1px 8px 0 0; overflow: hidden; }
.col { background: #ebebe9; position: relative; min-width: 0; }
h2 { font: 700 13px/14px var(--round); color: #111; padding-left: 1px; height: 19px; white-space: nowrap; }
.col:nth-child(-n+2) h2 span { display: inline-block; height: 19px; border-bottom: 1px solid #d0d0d0; padding-right: 8px; }
.pages { height: 36px; padding: 9px 0 0 10px; }
.pages b { font-size: 11px; }
.more-pages { padding-top: 10px; }
.more-pages svg { width: 31px; height: 14px; color: #55780c; vertical-align: -2px; margin-left: -2px; }
.lead-card { margin: 0 3px 0 5px; border-left: 5px solid #000; background: #dedede; padding: 7px 7px 0 7px; }
.curso { border-color: #ffc966; padding: 0 1px 0 1px; }
.person { display: flex; height: 29px; align-items: flex-start; }
.pic { width: 16px; height: 17px; color: #000; }
.person b { margin: 5px auto 0 7px; }
.contact { margin: 3px 4px 0 0; color: #222; }
.ident { display: flex; align-items: flex-end; gap: 3px; height: 23px; line-height: 14px; }
.ident svg { width: 23px; height: 23px; color: #08aeea; }
.assign select { width: 85px; height: 17px; border: 1px solid #c4c4c4; border-radius: 2px; padding-left: 0; display: block; }
.tools { display: flex; justify-content: flex-end; height: 24px; padding-top: 1px; }
.edit { width: 22px; height: 22px; background: #507408; border-radius: 3px; color: #fff; display: grid; place-items: center; flex: none; }
.edit svg { width: 18px; height: 18px; }
.pend .tools { height: 26px; padding-top: 2px; }
.curso .tools { height: 26px; gap: 0; padding: 2px 4px 0 0; }
.undo { color: #507408; margin-top: -18px; height: 24px; }
.undo svg { width: 24px; height: 24px; }
.detail { border: 2px solid #000; border-radius: 9px; background: #a5a5a5; font: 13px/15px var(--arial); color: #111; padding: 31px 20px 17px 10px; margin-left: 1px; }
.curso .detail { border: 1px solid #ffd07a; padding: 11px 20px 16px 9px; position: relative; margin-right: 0; }
.warn { font-weight: 700; font-size: 10px; display: flex; align-items: flex-end; justify-content: center; gap: 3px; padding-bottom: 15px; }
.warn svg { width: 19px; height: 18px; color: #ff1a0a; }
.note { background: #fafafa; border-radius: 4px; padding: 4px 4px 4px 5px; margin: 19px 35px 3px 15px; }
.curso .note { margin: 19px 37px 4px 15px; padding-right: 30px; }
.mod { display: flex; justify-content: flex-end; line-height: 23px; }
.mod span { padding: 0 4px; }
.ago { background: #76f0d2; }
.amber { background: #ffc966; }
.plate-row { display: flex; justify-content: flex-end; padding-right: 33px; height: 19px; }
.plate { height: 22px; border: 1px solid #444; border-left: 8px solid #0505c8; border-radius: 3px; background: #fff; color: #507408; font: 700 15px/20px var(--arial); padding: 0 4px; }
.list { width: 19px; height: 17px; color: #ff1a0a; position: absolute; right: 20px; top: 36px; }
.history { background: #cecece; border-radius: 4px; margin: 4px 41px 0 16px; padding: 15px 20px 0 4px; }
.curso .history { margin: 5px 44px 0 15px; padding: 15px 16px 6px 4px; }
.sign { text-align: right; font-size: 10px; line-height: 14px; margin-top: 9px; }

.booking { border-top: 1px solid #444; display: grid; grid-template-columns: 84px 1fr; column-gap: 5px; margin-right: -3px; padding: 3px 0 3px 1px; row-gap: 4px; align-items: start; }
.second { padding-top: 2px; row-gap: 3px; }
.reserved h2, .archive h2 { padding-top: 1px; }
.reserved h2 { height: 53px; }
.bigplate { border: 1px solid #555; border-left: 8px solid #0505c8; border-radius: 3px; background: #fff; height: 51px; text-align: center; color: #507408; display: flex; flex-direction: column; padding-left: 2px; }
.bigplate span { font-size: 15px; line-height: 19px; }
.bigplate b { font-size: 11px; line-height: 15px; }
.owner a { color: #6f8f32; display: block; height: 25px; }
.owner a svg { width: 11px; height: 12px; vertical-align: -1px; }
.second .owner a { height: 21px; padding-top: 1px; }
.agent { display: flex; align-items: center; height: 24px; padding-left: 5px; color: #111; }
.agent > svg { width: 20px; height: 20px; margin-right: 8px; }
.agent span { flex: 1; padding-right: 6px; }
.navy { color: #10294a; }
.due { align-self: center; display: flex; flex-direction: column; align-items: flex-start; line-height: 11px; }
.due b { background: #ff1a00; line-height: 13px; white-space: nowrap; }
.due button { border: 1px solid #c2cfc2; border-radius: 2px; background: #f4f4f4; line-height: 12px; padding: 0 2px; margin-top: 2px; }
.acts { display: flex; align-items: center; padding-left: 5px; color: #48a804; }
.lock { width: 21px; height: 23px; }
.truck { width: 29px; height: 24px; margin-left: 12px; }
.tg { margin-left: auto; width: 50px; color: #1a1a1a; }
.tg button { width: 46px; height: 40px; background: #425c05; border-radius: 3px; color: #b0d050; display: grid; place-items: center; }
.tg svg { width: 23px; height: 23px; }
.cut { fill: var(--cut); }
.hot { --cut: #ff8f1a; }
.hot button { background: #ff8f1a; border: 1px solid #d9682c; color: #d43c1c; }
.hot span { display: block; padding: 2px 0 0 2px; }
.pointer { position: absolute; left: 0; top: 159px; width: 9px; height: 14px; }

.archive h2 { height: 46px; margin-left: -5px; position: relative; }
.arch { display: flex; justify-content: space-between; height: 85px; }
.info { border-bottom: 1px solid #b4b4b4; padding-left: 3px; width: 181px; height: 79px; background: #f1f1f0; white-space: nowrap; }
.info > * { display: block; }
.info b svg { width: 10px; height: 11px; margin-right: 5px; vertical-align: -1px; }
.by svg { width: 11px; height: 11px; vertical-align: -2px; }
.mail { margin-top: 11px; }
.side { width: 15px; padding-top: 19px; color: #507408; overflow: hidden; }
.side > svg { width: 16px; height: 16px; display: block; }
.side .edit { width: 15px; height: 15px; border-radius: 2px; margin-top: 2px; }
.side .edit svg { width: 13px; height: 13px; }

.floating { position: absolute; right: 20px; bottom: 58px; background: #fff; border: 2px solid #526e1c; border-radius: 7px; padding: 3px; }
.floating select { appearance: none; display: block; width: 242px; height: 17px; border: 1px solid #666; border-bottom: 2px solid #222; border-radius: 0; font: 700 11px/13px var(--arial); color: #000; padding-left: 6px; background: #fff url("data:image/svg+xml,%3Csvg xmlns='http://www.w3.org/2000/svg' width='8' height='5'%3E%3Cpath d='M0 0h8L4 5z'/%3E%3C/svg%3E") no-repeat right 5px center; }

/* taskbar */
.taskbar { height: 39px; flex: none; background: linear-gradient(90deg, #20212c 0, #261f31 24%, #35203a 31%, #221f22 40%, #221f22 58%, #2a1c2e 68%, #281d33 80%, #221e2c 100%); display: flex; align-items: center; color: #fff; font: 11px/13px var(--ui); }
.weather { position: relative; width: 135px; padding-left: 16px; margin-right: 16px; }
.weather svg { width: 21px; height: 20px; display: block; }
.weather span { position: absolute; left: 26px; top: -3px; font-size: 9px; line-height: 10px; font-weight: 500; }
.start { width: 20px; height: 20px; }
.search { width: 184px; height: 27px; margin-left: 11px; border-radius: 14px; background: #443d4a; border: 1px solid #50495a; display: flex; align-items: center; padding-left: 9px; gap: 9px; }
.search svg { width: 13px; height: 13px; }
.search input { flex: 1; font: 11px/16px var(--ui); }
.search input::placeholder { color: #d0ccd4; opacity: 1; }
.apps { display: grid; grid-template-columns: repeat(16, 1fr); width: 589px; flex: none; margin-left: 2px; }
.apps span { position: relative; height: 34px; display: grid; place-items: center; }
.apps svg { width: 23px; height: 23px; }
.run::after { content: ""; position: absolute; bottom: 0; width: 6px; height: 2px; border-radius: 1px; background: #9a9a9a; }
.focus { background: #332f33; border-radius: 4px; }
.focus::after { width: 14px; background: #4cb4f5; }
.badge { position: absolute; left: 19px; top: 3px; min-width: 13px; height: 13px; border-radius: 7px; background: #4cb4f5; color: #10222f; font: 10px/13px var(--ui); text-align: center; }
.plain { background: #2c2a2c; color: #fff; left: 21px; }
.wide { left: 14px; width: 23px; }
.face { position: absolute; left: 19px; top: 2px; width: 13px; height: 13px; border-radius: 50%; background: #2c8a92; border: 3px solid #3f7176; }
.white { background: #bbb; border-color: #eee; }
.canva { font: italic 700 6px var(--arial); fill: #fff; }
.office { font: 700 9px var(--arial); fill: #fff; }
.fz { font: italic 700 15px var(--arial); fill: #fff; }
.tray { margin-left: auto; display: flex; align-items: center; padding-right: 14px; }
.t-up { width: 10px; height: 10px; margin-right: 15px; }
.t-cloud { width: 14px; height: 12px; margin-right: 15px; }
.t-mic { width: 10px; height: 14px; margin-right: 18px; }
.lang { margin-right: 17px; font-size: 10px; }
.t-wifi { width: 14px; height: 11px; margin-right: 6px; }
.t-vol { width: 13px; height: 11px; margin-right: 7px; }
.t-bat { width: 14px; height: 9px; }
.clock { text-align: right; width: 65px; font-size: 10px; }
.t-bell { width: 13px; height: 14px; margin-left: 7px; }
.below { height: 20px; flex: none; position: relative; overflow: hidden; }
.pill { position: absolute; left: 636px; top: 15px; width: 64px; height: 30px; border: 3px solid #7cc5f8; border-radius: 20px; background: #0b3350; }
```
